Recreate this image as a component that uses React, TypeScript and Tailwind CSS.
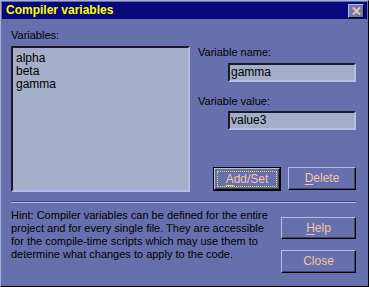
const Btn = ({
  label,
  hot,
  def,
}: {
  label: string;
  hot?: number;
  def?: boolean;
}) => {
  const text =
    hot === undefined ? (
      <span>{label}</span>
    ) : (
      <span>
        {label.slice(0, hot)}
        <span className="underline underline-offset-2">{label[hot]}</span>
        {label.slice(hot + 1)}
      </span>
    );
  return (
    <div className={def ? "w-full h-full border border-black" : "w-full h-full"}>
      <div className="w-full h-full flex items-center justify-center border border-t-[#b4bce8] border-l-[#b4bce8] border-r-black border-b-black shadow-[inset_-1px_-1px_0_#3c4478] text-[#f8c4a0] text-[12px]">
        {def ? (
          <div className="flex items-center justify-center w-[calc(100%-6px)] h-[calc(100%-6px)] outline outline-1 outline-dotted outline-[#e8e800]">
            {text}
          </div>
        ) : (
          text
        )}
      </div>
    </div>
  );
};

const sunken =
  "border-2 border-t-[#1a1a2a] border-l-[#1a1a2a] border-r-[#b4bce8] border-b-[#b4bce8] bg-[#a4aec8]";

export default function App() {
  return (
    <div className="w-[369px] h-[287px] bg-[#6670ad] border border-t-[#a8b0dc] border-l-[#a8b0dc] border-r-black border-b-black p-[1px] font-['Liberation_Sans',sans-serif] text-[11px] leading-[13px] text-black">
      {/* title */}
      <div className="h-[17px] bg-[#08087a] flex items-center justify-between pl-[4px] pr-[3px]">
        <span className="text-[#ffff00] font-bold text-[12px]">Compiler variables</span>
        <div className="w-[16px] h-[14px] bg-[#7078b4] border border-t-[#b4bce8] border-l-[#b4bce8] border-r-black border-b-black flex items-center justify-center">
          <svg width="9" height="8" viewBox="0 0 9 8">
            <path d="M1 0.5 L8 7.5 M8 0.5 L1 7.5" stroke="#f8c4a0" strokeWidth="2" />
          </svg>
        </div>
      </div>

      {/* body */}
      <div className="pl-[9px] pr-[11px] pt-[10px]">
        <div className="flex">
          <div className="w-[179px]">
            <div className="mb-[4px]">Variables:</div>
            <div className={`${sunken} h-[146px] px-[3px] py-[4px] text-[12px] leading-[13px]`}>
              <div>alpha</div>
              <div>beta</div>
              <div>gamma</div>
            </div>
          </div>
          <div className="ml-[8px] flex-1 pt-[17px]">
            <div>Variable name:</div>
            <div className={`${sunken} ml-[30px] mt-[4px] w-[128px] h-[19px] px-[1px] text-[12px] leading-[15px]`}>
              gamma
            </div>
            <div className="mt-[13px]">Variable value:</div>
            <div className={`${sunken} ml-[30px] mt-[3px] w-[128px] h-[19px] px-[1px] text-[12px] leading-[15px]`}>
              value3
            </div>
            <div className="flex justify-end gap-[7px] mt-[37px]">
              <div className="w-[68px] h-[24px]">
                <Btn label="Add/Set" hot={0} def />
              </div>
              <div className="w-[68px] h-[23px]">
                <Btn label="Delete" hot={0} />
              </div>
            </div>
          </div>
        </div>

        <div className="mt-[9px] h-[2px] border-t border-t-[#3c4478] border-b border-b-[#b4bce8]" />

        <div className="flex justify-between mt-[6px]">
          <p className="text-[11px] leading-[13px]">
            Hint: Compiler variables can be defined for the entire
            <br />
            project and for every single file. They are accessible
            <br />
            for the compile-time scripts which may use them to
            <br />
            determine what changes to apply to the code.
          </p>
          <div className="flex flex-col gap-[11px] pt-[8px]">
            <div className="w-[75px] h-[22px]">
              <Btn label="Help" hot={0} />
            </div>
            <div className="w-[75px] h-[23px]">
              <Btn label="Close" />
            </div>
          </div>
        </div>
      </div>
    </div>
  );
}
